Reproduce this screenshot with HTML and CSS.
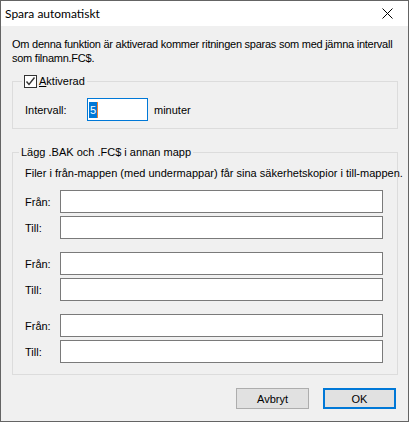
FILE: index.html
```html
<!DOCTYPE html>
<html lang="sv">
<head>
    <meta charset="UTF-8">
    <meta name="viewport" content="width=device-width, initial-scale=1.0">
    <title>Spara automatiskt</title>
    <link rel="stylesheet" href="styles.css">
</head>
<body>
    <div class="window">
        <div class="titlebar">
            <span class="title">Spara automatiskt</span>
            <svg class="close" width="11" height="11" viewBox="0 0 11 11">
                <path d="M0.5 0.5 L10.5 10.5 M10.5 0.5 L0.5 10.5" stroke="#000" stroke-width="1" fill="none"/>
            </svg>
        </div>

        <div class="content">
            <p class="info">Om denna funktion är aktiverad kommer ritningen sparas som med jämna intervall<br>som filnamn.FC$.</p>

            <fieldset class="group group-active">
                <legend>
                    <span class="checkbox">
                        <svg width="11" height="11" viewBox="0 0 11 11">
                            <path d="M1.5 5.5 L4 8.5 L9.5 1.5" stroke="#333" stroke-width="1.4" fill="none"/>
                        </svg>
                    </span>
                    <span><u>A</u>ktiverad</span>
                </legend>
                <div class="interval-row">
                    <span class="label-interval">Intervall:</span>
                    <div class="input input-small focused"><span class="selected">5</span></div>
                    <span>minuter</span>
                </div>
            </fieldset>

            <fieldset class="group group-folders">
                <legend>Lägg .BAK och .FC$ i annan mapp</legend>
                <p class="hint">Filer i från-mappen (med undermappar) får sina säkerhetskopior i till-mappen.</p>
                <div class="pairs"></div>
            </fieldset>

            <div class="buttons">
                <button class="btn">Avbryt</button>
                <button class="btn btn-default">OK</button>
            </div>
        </div>
    </div>

    <script>
        const pairs = document.querySelector('.pairs');

        for (let i = 0; i < 3; i++) {
            const pair = document.createElement('div');
            pair.classList.add('pair');

            ['Från:', 'Till:'].forEach(text => {
                const row = document.createElement('div');
                row.classList.add('field-row');

                const label = document.createElement('span');
                label.classList.add('field-label');
                label.textContent = text;

                const input = document.createElement('div');
                input.classList.add('input', 'input-wide');

                row.appendChild(label);
                row.appendChild(input);
                pair.appendChild(row);
            });

            pairs.appendChild(pair);
        }
    </script>
</body>
</html>
```

FILE: styles.css
```css
body {
    margin: 0;
    padding: 0;
    font-family: "Liberation Sans", Arial, sans-serif;
    font-size: 11px;
    color: #000;
}

.window {
    width: 409px;
    height: 422px;
    box-sizing: border-box;
    border: 1px solid #646464;
    background-color: #f0f0f0;
    display: flex;
    flex-direction: column;
}

.titlebar {
    height: 25px;
    background-color: #fff;
    display: flex;
    align-items: center;
    justify-content: space-between;
    padding: 0 15px 0 4px;
}

.title {
    font-family: Lato, sans-serif;
    font-size: 12px;
}

.close {
    display: block;
}

.content {
    padding: 11px 10px 0 11px;
}

.info {
    margin: 0;
    line-height: 14px;
    white-space: nowrap;
    letter-spacing: -0.25px;
}

.group {
    margin: 0;
    border: 1px solid #dcdcdc;
    min-width: 0;
}

.group legend {
    height: 14px;
    line-height: 14px;
    padding: 0 2px;
    margin-left: -6px;
    display: flex;
    align-items: center;
}

.group-active legend {
    margin-left: -3px;
}

.group-active {
    margin-top: 9px;
    padding: 10px 12px 7px 12px;
}

.group-folders {
    margin-top: 16px;
    padding: 7px 12px 11px 12px;
}

.checkbox {
    width: 11px;
    height: 11px;
    border: 1px solid #333;
    background-color: #fff;
    margin-right: 2px;
    display: flex;
}

.interval-row {
    display: flex;
    align-items: center;
    height: 23px;
}

.label-interval {
    width: 62px;
}

.input {
    box-sizing: border-box;
    height: 23px;
    border: 1px solid #7a7a7a;
    background-color: #fff;
}

.input-small {
    width: 61px;
    margin-right: 6px;
    display: flex;
    align-items: center;
    padding-left: 1px;
}

.input.focused {
    border-color: #0078d7;
}

.selected {
    background-color: #0078d7;
    color: #fff;
    line-height: 16px;
    padding: 0 1px;
    border-right: 1px solid #f08030;
}

.hint {
    margin: 0 0 10px 0;
    line-height: 14px;
    white-space: nowrap;
}

.pairs {
    display: flex;
    flex-direction: column;
    gap: 13px;
}

.pair {
    display: flex;
    flex-direction: column;
    gap: 3px;
}

.field-row {
    display: flex;
    align-items: center;
}

.field-label {
    width: 35px;
}

.input-wide {
    width: 323px;
}

.buttons {
    display: flex;
    justify-content: flex-end;
    gap: 14px;
    margin-top: 13px;
    padding-right: 2px;
}

.btn {
    box-sizing: border-box;
    width: 73px;
    height: 21px;
    border: 1px solid #adadad;
    background-color: #e1e1e1;
    font-family: "Liberation Sans", Arial, sans-serif;
    font-size: 11px;
    color: #000;
    padding: 0;
}

.btn-default {
    border: 2px solid #0078d7;
}
```
